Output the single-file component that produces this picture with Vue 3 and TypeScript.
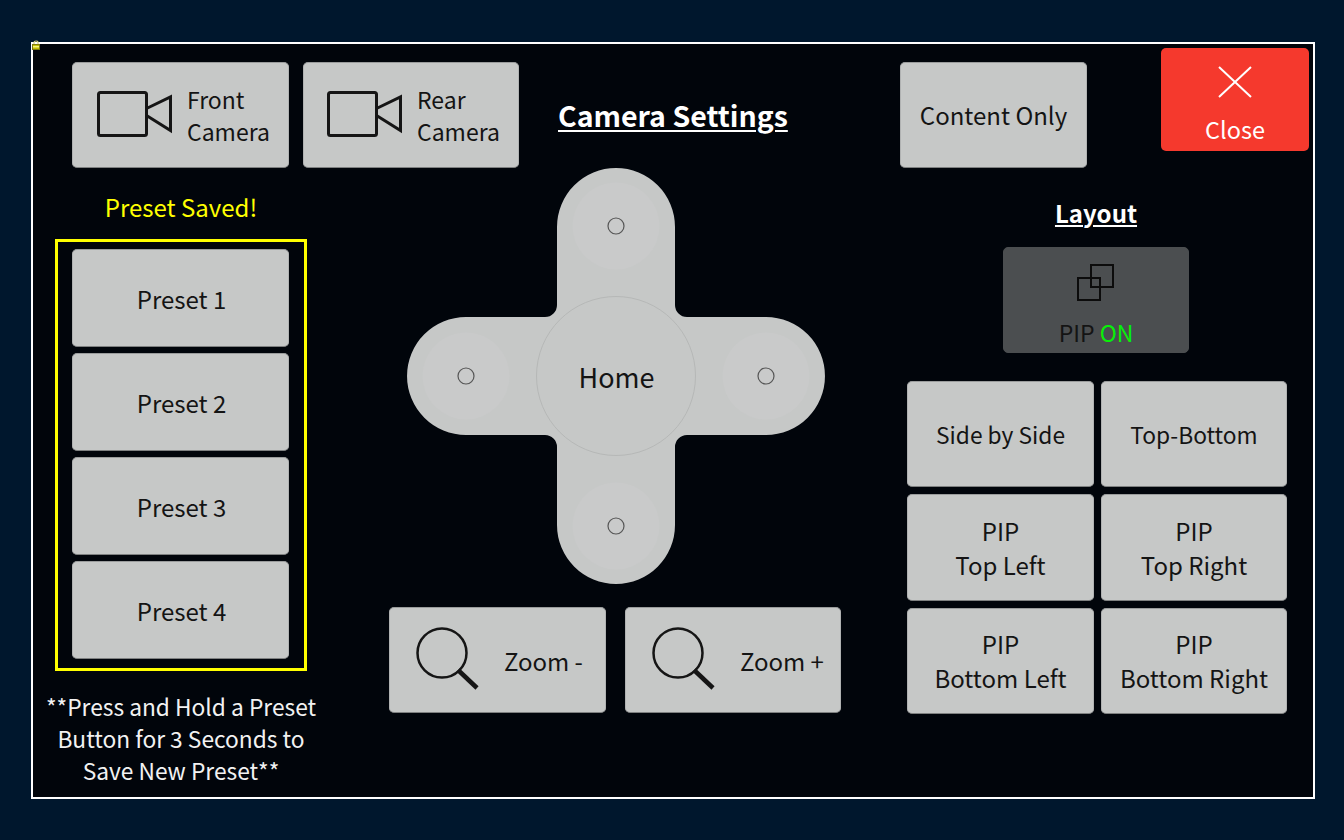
<script setup lang="ts">
const presets: string[] = ['Preset 1', 'Preset 2', 'Preset 3', 'Preset 4']
const layouts: { lines: string[]; small?: boolean }[] = [
  { lines: ['Side by Side'], small: true },
  { lines: ['Top-Bottom'], small: true },
  { lines: ['PIP', 'Top Left'] },
  { lines: ['PIP', 'Top Right'] },
  { lines: ['PIP', 'Bottom Left'] },
  { lines: ['PIP', 'Bottom Right'] },
]
const arrows = [
  { cx: 209, cy: 58 },
  { cx: 59, cy: 208 },
  { cx: 359, cy: 208 },
  { cx: 209, cy: 358 },
]
const zooms: string[] = ['Zoom -', 'Zoom +']
</script>

<template>
  <div class="page">
    <div class="panel">
      <svg class="lock" width="8" height="10" viewBox="0 0 8 10">
        <path d="M2 5V2.500C2 1.400 2.800 1 4 1s2 .4 2 1.500V5" fill="none" stroke="#d6d27a" stroke-width="1.200" />
        <rect x=".5" y="4.500" width="7" height="5" fill="#c4c000" stroke="#7d7a10" stroke-width="1" />
        <rect x="1" y="6" width="6" height="1.500" fill="#f6f67a" />
      </svg>

      <header class="top">
        <button class="btn cam cam-front">
          <svg class="cam-icon" width="78" height="50" viewBox="0 0 78 50">
            <rect x="1.500" y="1.500" width="48" height="43" rx="2" fill="none" stroke="#151515" stroke-width="3" />
            <path d="M49.500 17.500 73.500 6V39.500L49.500 24.500" fill="none" stroke="#151515" stroke-width="3" />
          </svg>
          <span class="cam-label">Front<br />Camera</span>
        </button>
        <button class="btn cam cam-rear">
          <svg class="cam-icon" width="78" height="50" viewBox="0 0 78 50">
            <rect x="1.500" y="1.500" width="48" height="43" rx="2" fill="none" stroke="#151515" stroke-width="3" />
            <path d="M49.500 17.500 73.500 6V39.500L49.500 24.500" fill="none" stroke="#151515" stroke-width="3" />
          </svg>
          <span class="cam-label">Rear<br />Camera</span>
        </button>
        <h1 class="title">Camera Settings</h1>
        <button class="btn content-only">Content Only</button>
        <button class="close">
          <svg width="34" height="32" viewBox="0 0 34 32">
            <path d="M1 1 33 31M33 1 1 31" fill="none" stroke="#fff" stroke-width="2" />
          </svg>
          <span>Close</span>
        </button>
      </header>

      <main class="main">
        <section class="col-left">
          <p class="saved">Preset Saved!</p>
          <div class="preset-box">
            <button v-for="p in presets" :key="p" class="btn preset">{{ p }}</button>
          </div>
          <p class="note">**Press and Hold a Preset<br />Button for 3 Seconds to<br />Save New Preset**</p>
        </section>

        <section class="col-center">
          <div class="dpad">
            <svg width="418" height="416" viewBox="0 0 418 416">
              <path
                d="M150 59A59 59 0 0 1 268 59V137A12 12 0 0 0 280 149H359A59 59 0 0 1 359 267H280A12 12 0 0 0 268 279V357A59 59 0 0 1 150 357V279A12 12 0 0 0 138 267H59A59 59 0 0 1 59 149H138A12 12 0 0 0 150 137Z"
                fill="#c6c8c7"
              />
              <g v-for="a in arrows" :key="a.cx + '-' + a.cy">
                <circle :cx="a.cx" :cy="a.cy" r="43.500" fill="#c9caca" />
                <circle :cx="a.cx" :cy="a.cy" r="8" fill="none" stroke="#555" stroke-width="1.200" />
              </g>
              <circle cx="209" cy="208" r="79.500" fill="#c6c8c7" stroke="#b6b8b7" stroke-width="1" />
            </svg>
            <span class="home">Home</span>
          </div>
          <div class="zoom-row">
            <button v-for="z in zooms" :key="z" class="btn zoom">
              <svg width="66" height="66" viewBox="0 0 66 66">
                <circle cx="26" cy="26" r="24.500" fill="none" stroke="#151515" stroke-width="2.500" />
                <path d="M42 43 61 61" fill="none" stroke="#151515" stroke-width="4.500" />
              </svg>
              <span>{{ z }}</span>
            </button>
          </div>
        </section>

        <section class="col-right">
          <h2 class="layout-title">Layout</h2>
          <button class="btn pip">
            <svg width="38" height="38" viewBox="0 0 38 38">
              <rect x="14" y="1" width="22" height="22" fill="none" stroke="#0c0c0c" stroke-width="2" />
              <rect x="1" y="14" width="22" height="22" fill="none" stroke="#0c0c0c" stroke-width="2" />
            </svg>
            <span class="pip-label">PIP <b class="on">ON</b></span>
          </button>
          <div class="layout-grid">
            <button
              v-for="l in layouts"
              :key="l.lines.join()"
              class="btn layout"
              :class="{ 'layout-small': l.small }"
            >
              <span v-for="t in l.lines" :key="t" class="layout-line">{{ t }}</span>
            </button>
          </div>
        </section>
      </main>
    </div>
  </div>
</template>

<style>
html,
body {
  margin: 0;
  background: #00172d;
}
</style>

<style scoped>
.page {
  width: 1344px;
  height: 840px;
  padding: 42px 0 0 31px;
  box-sizing: border-box;
  background: #00172d;
  font-family: "Noto Sans CJK JP", "Noto Sans", sans-serif;
  color: #141414;
  overflow: hidden;
}
.panel {
  position: relative;
  width: 1284px;
  height: 757px;
  box-sizing: border-box;
  border: 2px solid #fff;
  background: #01050b;
  padding-top: 4px;
}
.lock {
  position: absolute;
  left: -1px;
  top: -4px;
}
.btn {
  display: flex;
  align-items: center;
  justify-content: center;
  box-sizing: border-box;
  padding: 0;
  background: #c6c8c7;
  border: 1px solid #b0b2b2;
  border-color: #9a9c9c #b0b2b2 #7e8080;
  border-radius: 5px;
  color: #141414;
  font-family: inherit;
  font-size: 24px;
  font-weight: 400;
  line-height: 32px;
}
.top {
  display: flex;
  align-items: flex-start;
  height: 119px;
  padding-left: 39px;
  box-sizing: border-box;
}
.cam {
  width: 217px;
  height: 106px;
  margin-top: 14px;
  justify-content: flex-start;
}
.cam-front {
  padding-left: 24px;
}
.cam-rear {
  width: 216px;
  margin-left: 14px;
  padding-left: 23px;
}
.cam-icon {
  flex: none;
  margin-top: 2px;
}
.cam-label {
  margin-left: 12px;
  margin-top: -1px;
  text-align: left;
  font-size: 23px;
}
.title {
  margin: 47px 0 0 39px;
  width: 229px;
  color: #fff;
  font-size: 28.500px;
  font-weight: 700;
  line-height: 40px;
  text-decoration: underline;
  text-decoration-thickness: 2px;
  text-underline-offset: 3px;
  white-space: nowrap;
}
.content-only {
  width: 187px;
  height: 106px;
  margin: 14px 0 0 113px;
}
.close {
  display: flex;
  flex-direction: column;
  align-items: center;
  width: 148px;
  height: 103px;
  margin-left: 74px;
  padding: 18px 0 0;
  box-sizing: border-box;
  background: #f5392d;
  border: 0;
  border-radius: 5px;
  color: #fff;
  font-family: inherit;
  font-size: 23.500px;
  line-height: 32px;
}
.close span {
  margin-top: 15px;
}
.main {
  display: flex;
  align-items: flex-start;
}
.col-left {
  width: 252px;
  margin-left: 22px;
  display: flex;
  flex-direction: column;
  align-items: center;
}
.saved {
  margin: 24px 0 16px;
  color: #ff0;
  font-size: 24px;
  line-height: 32px;
}
.preset-box {
  width: 252px;
  height: 432px;
  box-sizing: border-box;
  border: 3px solid #ff0;
  padding: 7px 15px 7px 14px;
  display: flex;
  flex-direction: column;
  gap: 6px;
}
.preset {
  width: 217px;
  height: 98px;
  padding: 2px 0 0 2px;
}
.note {
  margin: 20px 0 0;
  color: #f2f2f2;
  font-size: 22.750px;
  line-height: 32px;
  text-align: center;
  white-space: nowrap;
}
.col-center {
  width: 452px;
  margin-left: 82px;
  display: flex;
  flex-direction: column;
  align-items: center;
}
.dpad {
  position: relative;
  width: 418px;
  height: 416px;
  margin: 1px 0 0 2px;
}
.dpad svg {
  display: block;
}
.home {
  position: absolute;
  left: 1px;
  right: 0;
  top: 189px;
  text-align: center;
  font-size: 27px;
  line-height: 40px;
}
.zoom-row {
  display: flex;
  gap: 19px;
  margin-top: 23px;
  align-self: flex-start;
}
.zoom {
  width: 217px;
  height: 106px;
  justify-content: flex-start;
  padding-left: 26px;
  gap: 22px;
}
.zoom + .zoom {
  width: 216px;
}
.zoom svg {
  flex: none;
  margin-top: -1px;
}
.zoom span {
  white-space: nowrap;
  margin-top: 2px;
}
.col-right {
  width: 380px;
  margin-left: 66px;
  display: flex;
  flex-direction: column;
  align-items: center;
}
.layout-title {
  margin: 26px 0 14px;
  color: #fff;
  font-size: 24px;
  font-weight: 700;
  line-height: 40px;
  text-decoration: underline;
  text-decoration-thickness: 1.500px;
  text-underline-offset: 2px;
  transform: translateX(-1px);
}
.pip {
  width: 186px;
  height: 106px;
  flex-direction: column;
  justify-content: flex-start;
  padding-top: 16px;
  background: #4b4e50;
  border-color: #4b4e50;
  margin-left: -2px;
  font-size: 23px;
}
.pip svg {
  flex: none;
}
.pip-label {
  margin-top: 14px;
}
.on {
  color: #08f008;
  font-weight: 400;
}
.layout-grid {
  display: grid;
  grid-template-columns: 187px 186px;
  grid-template-rows: 106px 107px 106px;
  gap: 7px;
  margin-top: 28px;
  align-self: flex-start;
}
.layout {
  flex-direction: column;
  line-height: 34px;
}
.layout-small {
  font-size: 22.750px;
  padding-top: 2px;
}
.layout-line {
  display: block;
  white-space: nowrap;
}
</style>
